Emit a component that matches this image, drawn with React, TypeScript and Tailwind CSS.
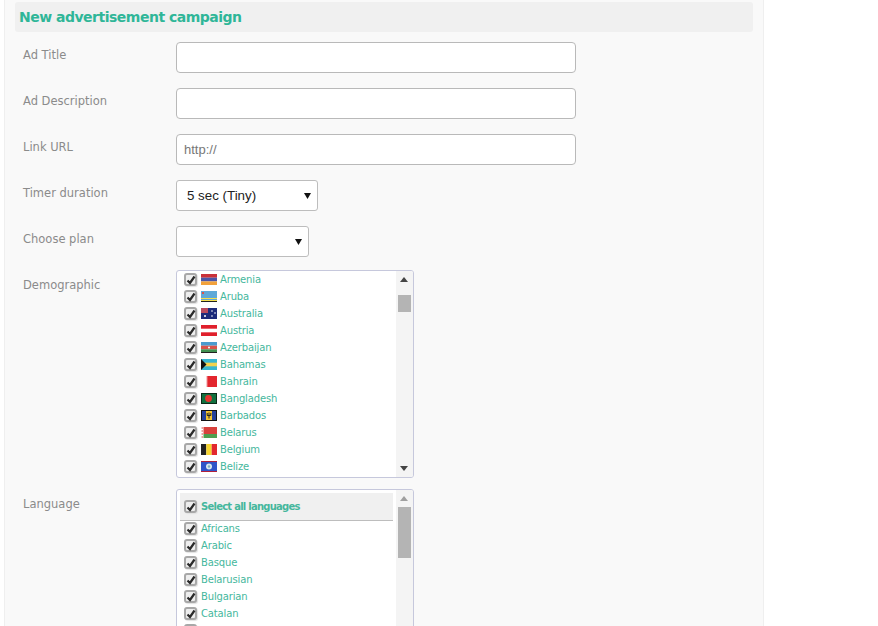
const labelFont = "font-['DejaVu_Sans',sans-serif]"

function Check() {
  return (
    <span className="flex size-[13px] shrink-0 items-center justify-center rounded-[3px] border-2 border-[#a8a8a8] bg-[#eeeeee] shadow-[1px_1px_1px_#e2e2e2]">
      <svg viewBox="0 0 10 10" className="size-[10px] shrink-0">
        <path d="M1.5 5.5 L4 8 L8.5 1.5" fill="none" stroke="#2a2a2a" strokeWidth="2.2" />
      </svg>
    </span>
  )
}

function Flag({ children }: { children: React.ReactNode }) {
  return (
    <svg viewBox="0 0 16 11" className="h-[11px] w-[16px] shrink-0">
      {children}
    </svg>
  )
}

const countries: [string, React.ReactNode][] = [
  ['Armenia', <><rect width="16" height="3.7" fill="#c9303a" /><rect y="3.7" width="16" height="3.7" fill="#4a55a8" /><rect y="7.4" width="16" height="3.6" fill="#f2a13a" /></>],
  ['Aruba', <><rect width="16" height="11" fill="#5fa9d8" /><rect y="7" width="16" height="1" fill="#f5e050" /><rect y="9" width="16" height="1" fill="#f5e050" /><rect x="1" y="1" width="2" height="2" fill="#d9534f" /><path d="M0 10.5H16" stroke="#222" /></>],
  ['Australia', <><rect width="16" height="11" fill="#1c2a7a" /><rect width="7" height="5" fill="#b84a5e" /><circle cx="4" cy="8" r="1" fill="#fff" /><circle cx="11" cy="3" r=".8" fill="#fff" /><circle cx="14" cy="5" r=".8" fill="#fff" /><circle cx="11" cy="8" r=".8" fill="#fff" /></>],
  ['Austria', <><rect width="16" height="11" fill="#e0202c" /><rect y="3.7" width="16" height="3.6" fill="#fff" /></>],
  ['Azerbaijan', <><rect width="16" height="3.7" fill="#4a9bcf" /><rect y="3.7" width="16" height="3.6" fill="#d9534a" /><rect y="7.3" width="16" height="3.7" fill="#3f8f4f" /><circle cx="8" cy="5.5" r="1" fill="#fff" /><path d="M0 10.5H16" stroke="#222" /></>],
  ['Bahamas', <><rect width="16" height="11" fill="#38b6d0" /><rect y="3.7" width="16" height="3.6" fill="#f3d24e" /><path d="M0 0 L5.5 5.5 L0 11Z" fill="#111" /></>],
  ['Bahrain', <><rect width="16" height="11" fill="#e3262e" /><path d="M0 0H5L7 1L5 2L7 3L5 4L7 5L5 6L7 7L5 8L7 9L5 10L7 11H0Z" fill="#fff" /></>],
  ['Bangladesh', <><rect width="16" height="11" fill="#11703f" /><circle cx="7.5" cy="5.5" r="3.4" fill="#e8332f" /><rect x=".5" y=".5" width="15" height="10" fill="none" stroke="#0b2a18" /></>],
  ['Barbados', <><rect width="16" height="11" fill="#f4c430" /><rect width="5" height="11" fill="#24409a" /><rect x="11" width="5" height="11" fill="#24409a" /><path d="M8 2.5V8.5M6.2 3V5.5H9.8V3" fill="none" stroke="#222" strokeWidth="1" /><rect x=".5" y=".5" width="15" height="10" fill="none" stroke="#111" /></>],
  ['Belarus', <><rect width="16" height="7" fill="#d9413c" /><rect y="7" width="16" height="4" fill="#4e9e4f" /><rect width="2.5" height="11" fill="#fff" /><path d="M.5 1H2M.5 4H2M.5 7H2M.5 10H2" stroke="#d9413c" /></>],
  ['Belgium', <><rect width="5.3" height="11" fill="#222" /><rect x="5.3" width="5.4" height="11" fill="#f7d531" /><rect x="10.7" width="5.3" height="11" fill="#e2272f" /></>],
  ['Belize', <><rect width="16" height="11" fill="#b0203c" /><rect y="1" width="16" height="9" fill="#2f54c8" /><circle cx="8" cy="5.5" r="3" fill="#d8e8ee" /><circle cx="8" cy="5.5" r="1.2" fill="#7fb0c0" /></>],
]

const languages = ['Africans', 'Arabic', 'Basque', 'Belarusian', 'Bulgarian', 'Catalan']

function Row({ label, labelPad = 'pt-[5px]', children }: { label: string; labelPad?: string; children: React.ReactNode }) {
  return (
    <div className="flex items-start">
      <div className={`${labelFont} ${labelPad} w-[161px] pl-[8px] text-[11.5px] leading-[17px] text-[#8b8b8b]`}>{label}</div>
      {children}
    </div>
  )
}

function TextField({ value }: { value?: string }) {
  return (
    <div className="flex h-[31px] w-[400px] items-center rounded-[4px] border border-[#b9b9b9] bg-white px-[7px] font-['Liberation_Sans',sans-serif] text-[13px] text-[#777]">
      {value}
    </div>
  )
}

function SelectBox({ value, width }: { value?: string; width: string }) {
  return (
    <div className={`${width} flex h-[31px] items-center justify-between rounded-[3px] border border-[#bdbdbd] bg-white pl-[10px] pr-[6px] font-['Liberation_Sans',sans-serif] text-[13.33px] text-[#222]`}>
      <span>{value}</span>
      <svg viewBox="0 0 8 8" className="size-[7px]">
        <path d="M0 1H8L4 8Z" fill="#111" />
      </svg>
    </div>
  )
}

function Scrollbar({ thumb, faded }: { thumb: string; faded?: boolean }) {
  return (
    <div className="relative w-[17px] shrink-0 bg-[#f4f4f4]">
      <svg viewBox="0 0 8 5" className="absolute left-[4px] top-[6px] h-[5px] w-[8px]">
        <path d="M4 0L8 5H0Z" fill={faded ? '#a0a0a0' : '#444'} />
      </svg>
      <div className={`absolute left-[2px] w-[13px] bg-[#b4b4b4] ${thumb}`} />
      <svg viewBox="0 0 8 5" className="absolute bottom-[6px] left-[4px] h-[5px] w-[8px]">
        <path d="M0 0H8L4 5Z" fill="#444" />
      </svg>
    </div>
  )
}

export default function App() {
  return (
    <div className="h-[626px] w-[878px] overflow-hidden bg-white">
      <div className="ml-[4px] h-[640px] w-[760px] border-x border-[#efefef] bg-[#f9f9f9] pl-[10px] pr-[10px] pt-[2px]">
        <h1 className={`${labelFont} flex h-[30px] items-center rounded-[3px] bg-[#f0f0f0] pl-[4px] text-[14px] font-bold tracking-[-0.5px] text-[#2fb698]`}>
          New advertisement campaign
        </h1>

        <div className="mt-[10px] flex flex-col gap-[15px]">
          <Row label="Ad Title"><TextField /></Row>
          <Row label="Ad Description"><TextField /></Row>
          <Row label="Link URL"><TextField value="http://" /></Row>
          <Row label="Timer duration"><SelectBox value="5 sec (Tiny)" width="w-[142px]" /></Row>
          <Row label="Choose plan"><SelectBox width="w-[133px]" /></Row>
        </div>

        <div className="mt-[13px]">
          <Row label="Demographic" labelPad="pt-[7px]">
            <div className="flex h-[208px] w-[238px] overflow-hidden rounded-[3px] border border-[#c6c8dc] bg-white">
              <div className={`${labelFont} flex-1 pl-[7px] text-[10px] tracking-[-0.15px] text-[#45b79d]`}>
                {countries.map(([name, flag]) => (
                  <div key={name} className="flex h-[17px] items-center">
                    <Check />
                    <span className="ml-[4px] mr-[3px] flex"><Flag>{flag}</Flag></span>
                    <span>{name}</span>
                  </div>
                ))}
              </div>
              <Scrollbar thumb="top-[24px] h-[17px]" />
            </div>
          </Row>
        </div>

        <div className="mt-[11px]">
          <Row label="Language" labelPad="pt-[7px]">
            <div className="flex h-[160px] w-[238px] overflow-hidden rounded-[3px] border border-[#c6c8dc] bg-white">
              <div className={`${labelFont} flex-1 px-[3px] pt-[3px] text-[10px] tracking-[-0.15px] text-[#45b79d]`}>
                <div className="flex h-[28px] items-center border-b border-[#bdbdbd] bg-[#f0f0f0] pl-[4px] font-bold tracking-[-0.75px]">
                  <Check />
                  <span className="ml-[4px]">Select all languages</span>
                </div>
                <div className="-mt-px pl-[4px]">
                  {languages.map((name) => (
                    <div key={name} className="flex h-[17px] items-center">
                      <Check />
                      <span className="ml-[4px]">{name}</span>
                    </div>
                  ))}
                  <div className="mt-[2px]"><Check /></div>
                </div>
              </div>
              <Scrollbar thumb="top-[17px] h-[51px]" faded />
            </div>
          </Row>
        </div>
      </div>
    </div>
  )
}
